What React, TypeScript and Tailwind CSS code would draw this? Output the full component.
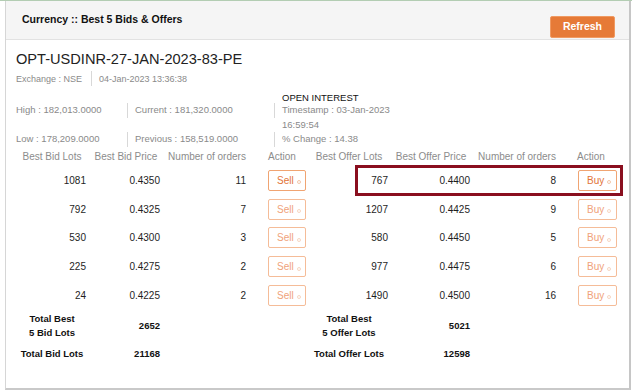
import React from "react";

type Row = { lots: string; price: string; orders: string };

const bids: Row[] = [
  { lots: "1081", price: "0.4350", orders: "11" },
  { lots: "792", price: "0.4325", orders: "7" },
  { lots: "530", price: "0.4300", orders: "3" },
  { lots: "225", price: "0.4275", orders: "2" },
  { lots: "24", price: "0.4225", orders: "2" },
];

const offers: Row[] = [
  { lots: "767", price: "0.4400", orders: "8" },
  { lots: "1207", price: "0.4425", orders: "9" },
  { lots: "580", price: "0.4450", orders: "5" },
  { lots: "977", price: "0.4475", orders: "6" },
  { lots: "1490", price: "0.4500", orders: "16" },
];

const cols = "grid grid-cols-[72px_76px_86px_60px_78px_86px_86px_60px]";

function ActionButton({ label, active }: { label: string; active: boolean }) {
  return (
    <span
      className={`ml-[18px] inline-flex h-[21px] items-center rounded-[2px] border pl-[8px] text-[10px] ${
        label === "Buy" ? "w-[39px]" : "w-[38px]"
      } ${
        active
          ? "border-[#f0a472] text-[#e27438]"
          : "border-[#f5bc98] text-[#f0a27a]"
      }`}
    >
      {label}
      <span
        className={`ml-[3px] mt-[4px] h-[4px] w-[4px] rounded-full border ${
          active ? "border-[#f3c7aa]" : "border-[#f8d6c2]"
        }`}
      />
    </span>
  );
}

export default function App() {
  return (
    <div
      className="h-[391px] w-[632px] overflow-hidden border-t border-[#b3cdb3] bg-white"
      style={{ fontFamily: '"Liberation Sans", Arial, sans-serif' }}
    >
      <div className="relative ml-[5px] h-[389px] w-[626px] border-b-2 border-l border-r-2 border-b-[#c9c9c9] border-l-[#d6d6d6] border-r-[#c6c6c6] bg-white">
        {/* header */}
        <div className="flex h-[39px] items-start justify-between border-b border-[#e2e2e2] bg-[#f5f5f5]">
          <div className="ml-[16px] mt-[12px] text-[10.5px] font-bold leading-[12px] text-[#111]">
            Currency :: Best 5 Bids &amp; Offers
          </div>
          <button className="mr-[14px] mt-[15px] h-[22px] w-[65px] rounded-[2px] border border-[#f09a62] bg-[#e67a37] text-[10.5px] font-bold text-white">
            Refresh
          </button>
        </div>

        <div className="pl-[10px]">
          {/* instrument */}
          <div className="pt-[10px] text-[14.6px] leading-[18px] text-[#222]">
            OPT-USDINR-27-JAN-2023-83-PE
          </div>
          <div className="mt-[3px] flex items-center text-[9px] leading-[12px] text-[#8a8a8a]">
            <span className="pr-[9px]">Exchange : NSE</span>
            <span className="flex h-[15px] items-center border-l border-[#d8d8d8] pl-[7px]">
              04-Jan-2023 13:36:38
            </span>
          </div>

          {/* stats */}
          <div className="mt-[6px] grid grid-cols-[111px_147px_1fr] text-[9.5px] text-[#8a8a8a]">
            <div />
            <div />
            <div className="pl-[8px] leading-[11px] text-[#111]">OPEN INTEREST</div>

            <div className="flex h-[15px] items-center">High : 182,013.0000</div>
            <div className="flex h-[15px] items-center border-l border-[#d8d8d8] pl-[7px]">
              Current : 181,320.0000
            </div>
            <div>
              <div className="flex h-[15px] items-center border-l border-[#d8d8d8] pl-[7px]">
                Timestamp : 03-Jan-2023
              </div>
              <div className="h-[14px] pl-[8px] leading-[13px]">16:59:54</div>
            </div>

            <div className="flex h-[15px] items-center">Low : 178,209.0000</div>
            <div className="flex h-[15px] items-center border-l border-[#d8d8d8] pl-[7px]">
              Previous : 158,519.0000
            </div>
            <div className="flex h-[15px] items-center border-l border-[#d8d8d8] pl-[7px]">
              % Change : 14.38
            </div>
          </div>

          {/* table */}
          <div className={`${cols} h-[19px] items-center text-[10px] text-[#8c8c8c]`}>
            <div className="text-center">Best Bid Lots</div>
            <div className="text-center">Best Bid Price</div>
            <div className="text-center">Number of orders</div>
            <div className="pl-[18px]">Action</div>
            <div className="text-center">Best Offer Lots</div>
            <div className="text-center">Best Offer Price</div>
            <div className="text-center">Number of orders</div>
            <div className="pl-[17px]">Action</div>
          </div>

          {bids.map((b, i) => {
            const o = offers[i];
            return (
              <div
                key={i}
                className={`${cols} h-[28.75px] items-center text-[10px] text-[#1e1e1e]`}
              >
                <div className="pr-[2px] text-right">{b.lots}</div>
                <div className="pr-[4px] text-right">{b.price}</div>
                <div className="pr-[4px] text-right">{b.orders}</div>
                <div>
                  <ActionButton label="Sell" active={i === 0} />
                </div>
                <div className="text-right">{o.lots}</div>
                <div className="pr-[4px] text-right">{o.price}</div>
                <div className="pr-[4px] text-right">{o.orders}</div>
                <div>
                  <ActionButton label="Buy" active={i === 0} />
                </div>
              </div>
            );
          })}

          {/* totals */}
          <div className={`${cols} h-[33px] items-center text-[9.5px] font-bold text-[#111]`}>
            <div className="text-center leading-[14px]">
              Total Best
              <br />5 Bid Lots
            </div>
            <div className="pr-[4px] text-right">2652</div>
            <div />
            <div />
            <div className="text-center leading-[14px]">
              Total Best
              <br />5 Offer Lots
            </div>
            <div className="pr-[4px] text-right">5021</div>
          </div>
          <div className={`${cols} h-[22px] items-center text-[9.5px] font-bold text-[#111]`}>
            <div className="text-center">Total Bid Lots</div>
            <div className="pr-[4px] text-right">21168</div>
            <div />
            <div />
            <div className="text-center">Total Offer Lots</div>
            <div className="pr-[4px] text-right">12598</div>
          </div>
        </div>

        {/* highlight annotation */}
        <div className="pointer-events-none absolute left-[349px] top-[164px] h-[31px] w-[268px] border-[3px] border-[#8a0f1f]" />
      </div>
    </div>
  );
}
